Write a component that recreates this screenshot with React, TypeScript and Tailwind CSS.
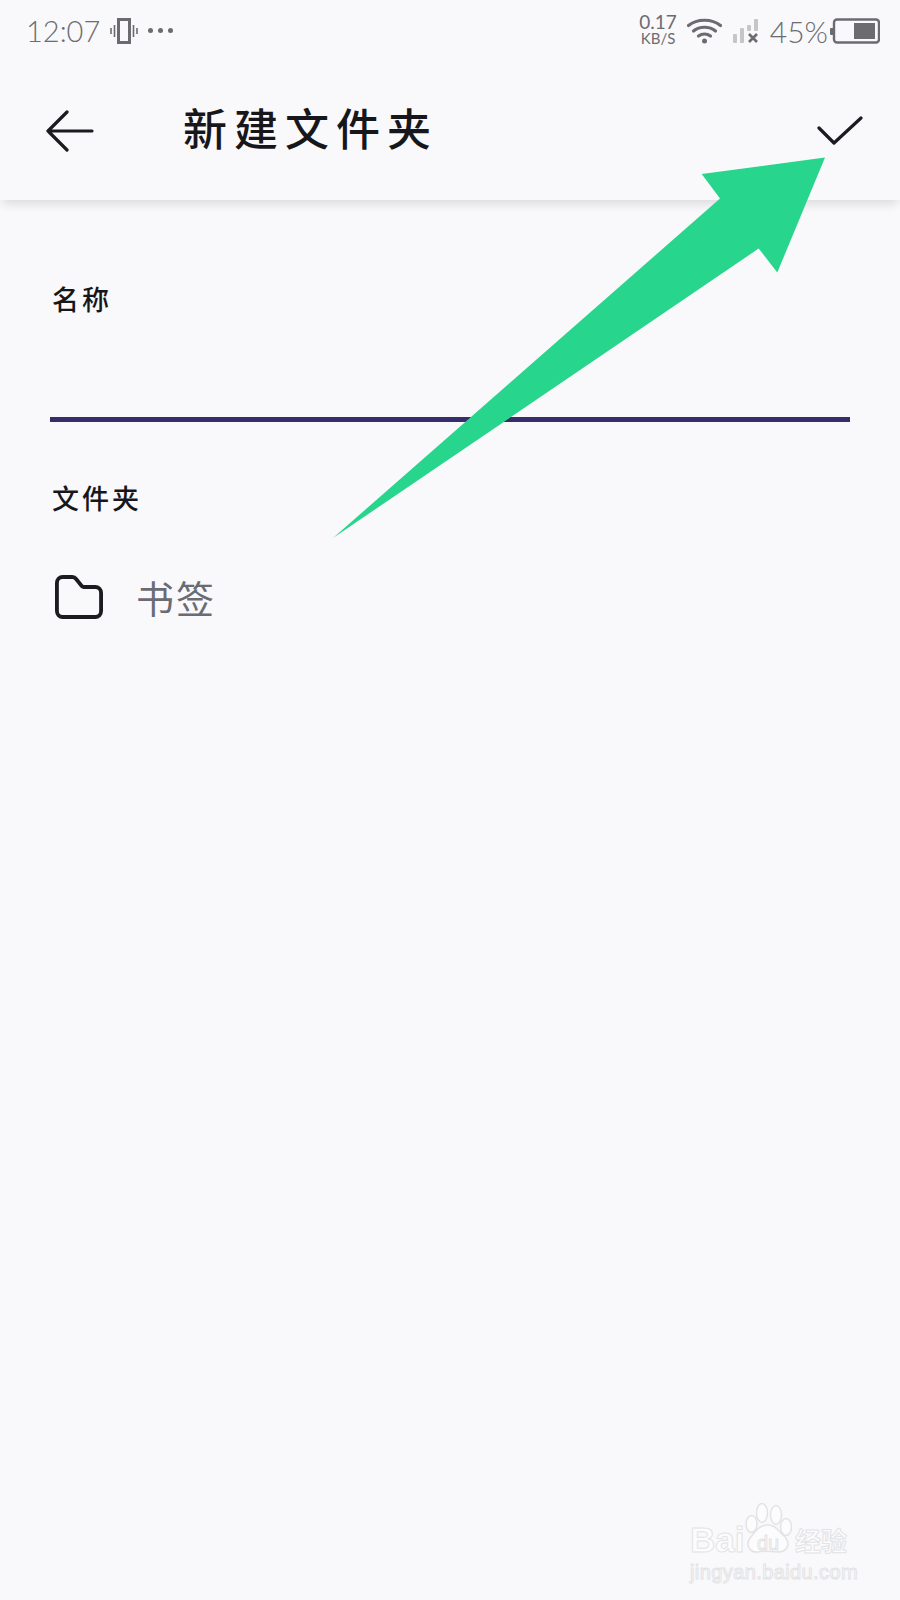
import React from 'react';

const sans = 'font-["Lato","Noto_Sans",sans-serif]';
const cjk = 'font-["Liberation_Serif","Noto_Sans_CJK_SC",serif]';

const StatusBar: React.FC = () => (
  <div className={`relative z-10 flex h-[62px] items-center bg-[#f9f9fb] pb-[1px] pl-[26px] pr-[20px] text-[#6c6c70] ${sans}`}>
    <span className="text-[29px] font-light leading-none">12:07</span>
    <svg className="ml-[10px]" width="28" height="26" viewBox="0 0 28 26" fill="none" stroke="#6c6c70">
      <rect x="8.5" y="1.5" width="11" height="23" strokeWidth="3" />
      <path d="M4.5 7v12M1 10v6M23.5 7v12M27 10v6" strokeWidth="1.6" />
    </svg>
    <div className="ml-[10px] flex gap-[5px]">
      <div className="h-[5px] w-[5px] rounded-full bg-[#6c6c70]" />
      <div className="h-[5px] w-[5px] rounded-full bg-[#6c6c70]" />
      <div className="h-[5px] w-[5px] rounded-full bg-[#6c6c70]" />
    </div>
    <div className="ml-auto flex flex-col items-center pb-[3px]">
      <span className="text-[19px] leading-[19px]">0.17</span>
      <span className="text-[15px] leading-[15px]">KB/S</span>
    </div>
    <svg className="ml-[10px]" width="35" height="26" viewBox="0 0 35 26" fill="none" stroke="#6c6c70" strokeWidth="3.2" strokeLinecap="round">
      <path d="M1.5 7.5C10 .5 25 .5 33.5 7.5" />
      <path d="M6.5 13C12.500 8 22.500 8 28.500 13" />
      <path d="M11.500 18C15 15.500 20 15.500 23.500 18" />
      <circle cx="17.500" cy="23" r="2.500" fill="#6c6c70" stroke="none" />
    </svg>
    <svg className="ml-[10px]" width="28" height="26" viewBox="0 0 28 26">
      <rect x="1" y="16" width="4" height="9" rx="1" fill="#c6c6c8" />
      <rect x="8" y="10" width="4" height="15" rx="1" fill="#c6c6c8" />
      <rect x="15" y="7" width="4" height="6" rx="1" fill="#c6c6c8" />
      <rect x="22" y="1" width="4" height="12" rx="1" fill="#c6c6c8" />
      <path d="M17 16l8 8M25 16l-8 8" stroke="#6c6c70" strokeWidth="2.6" />
    </svg>
    <span className="ml-[10px] text-[30px] font-light leading-none">45%</span>
    <svg className="ml-[2px]" width="50" height="26" viewBox="0 0 50 26">
      <rect x="0" y="10" width="4" height="7" rx="1" fill="#6c6c70" />
      <rect x="4" y="1.500" width="45" height="23" rx="3" fill="none" stroke="#6c6c70" strokeWidth="2.400" />
      <rect x="24" y="5" width="21" height="16" fill="#6c6c70" />
    </svg>
  </div>
);

const Header: React.FC = () => (
  <header className="relative flex h-[138px] items-center bg-[#f9f9fb] pl-[46px] pr-[37px] shadow-[0_6px_10px_-2px_rgba(0,0,0,0.12)]">
    <svg width="48" height="42" viewBox="0 0 48 42" fill="none" stroke="#1b1b20" strokeWidth="3.200" strokeLinecap="round" strokeLinejoin="round">
      <path d="M46 21H2M21 2L2 21l19 19" />
    </svg>
    <h1 className={`ml-[89px] mt-[2px] text-[44px] font-medium leading-none tracking-[7px] text-[#17171b] ${cjk}`}>新建文件夹</h1>
    <svg className="ml-auto" width="46" height="30" viewBox="0 0 46 30" fill="none" stroke="#1b1b20" strokeWidth="3.200" strokeLinecap="round" strokeLinejoin="round">
      <path d="M2 12l15 15L44 2" />
    </svg>
  </header>
);

const Watermark: React.FC = () => (
  <div className="absolute left-[688px] top-[1500px] h-[88px] w-[166px] text-[#fcfcfd] [-webkit-text-stroke:1px_#e3e3e6]">
    <span className="absolute left-[2px] top-[22px] font-['Liberation_Sans',sans-serif] text-[35px] font-bold leading-none">Bai</span>
    <svg className="absolute left-[57px] top-[3px]" width="47" height="50" viewBox="0 0 47 50" fill="#fcfcfd" stroke="#e3e3e6" strokeWidth="1.500">
      <ellipse cx="17" cy="10" rx="5.500" ry="9.500" />
      <ellipse cx="31" cy="12" rx="5.500" ry="9.500" />
      <ellipse cx="6.500" cy="21" rx="5.500" ry="8.500" />
      <ellipse cx="41" cy="24" rx="5.500" ry="8.500" />
      <path d="M23 22c8 0 11 7 17 12 6 7 2 15-7 15-6 0-13-2-20 0-8 1-13-7-8-14 5-6 9-13 18-13z" />
    </svg>
    <span className="absolute left-[69px] top-[33px] font-['Liberation_Sans',sans-serif] text-[20px] leading-none">du</span>
    <span className="absolute left-[107px] top-[27px] font-['Noto_Sans_CJK_SC',sans-serif] text-[26px] font-bold leading-none">经验</span>
    <span className="absolute left-[2px] top-[62px] font-['Liberation_Sans',sans-serif] text-[20px] leading-none tracking-[0.4px]">jingyan.baidu.com</span>
  </div>
);

const App: React.FC = () => {
  return (
    <div className="relative h-[1600px] w-[900px] overflow-hidden bg-[#f9f9fb]">
      <StatusBar />
      <Header />
      <main className="flex flex-col px-[50px]">
        <label className={`ml-[2px] mt-[85px] text-[27px] font-medium leading-[32px] tracking-[3px] text-[#17171b] ${cjk}`}>名称</label>
        <div className="mt-[100px] h-[5px] bg-[#362d6a]" />
        <label className={`ml-[2px] mt-[62px] text-[27px] font-medium leading-[32px] tracking-[3px] text-[#17171b] ${cjk}`}>文件夹</label>
        <div className="ml-[5px] mt-[59px] flex items-center">
          <svg width="48" height="44" viewBox="0 0 50 44" preserveAspectRatio="none" fill="none" stroke="#1b1b20" strokeWidth="4" strokeLinejoin="round">
            <path d="M2 8a6 6 0 0 1 6-6h10a5 5 0 0 1 4 2l5 6a4 4 0 0 0 3 2h12a6 6 0 0 1 6 6v18a6 6 0 0 1-6 6H8a6 6 0 0 1-6-6z" />
          </svg>
          <span className={`ml-[33px] mt-[6px] text-[38px] leading-none tracking-[2px] text-[#6b6b73] ${cjk}`}>书签</span>
        </div>
      </main>
      {/* annotation arrow drawn on top of the screenshot */}
      <svg className="absolute left-0 top-0" width="900" height="600" viewBox="0 0 900 600">
        <polygon points="825,157.500 777.300,272.500 758.700,248.500 333,538 720,198.500 701.700,174" fill="#27d58c" />
      </svg>
      <Watermark />
    </div>
  );
};

export default App;
